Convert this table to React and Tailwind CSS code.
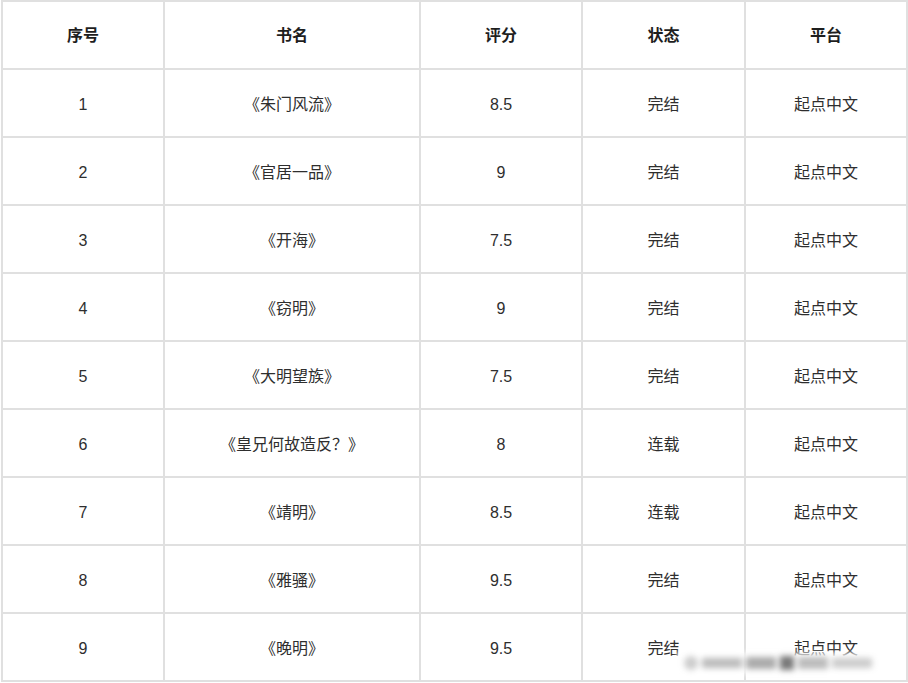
import React from "react";

const rows = [
  ["1", "《朱门风流》", "8.5", "完结", "起点中文"],
  ["2", "《官居一品》", "9", "完结", "起点中文"],
  ["3", "《开海》", "7.5", "完结", "起点中文"],
  ["4", "《窃明》", "9", "完结", "起点中文"],
  ["5", "《大明望族》", "7.5", "完结", "起点中文"],
  ["6", "《皇兄何故造反？》", "8", "连载", "起点中文"],
  ["7", "《靖明》", "8.5", "连载", "起点中文"],
  ["8", "《雅骚》", "9.5", "完结", "起点中文"],
  ["9", "《晚明》", "9.5", "完结", "起点中文"],
];

const headers = ["序号", "书名", "评分", "状态", "平台"];
const widths = ["w-[162px]", "w-[256px]", "w-[162px]", "w-[163px]", "w-[162px]"];

export default function App() {
  return (
    <div
      className="w-[908px] h-[683px] bg-white relative overflow-hidden pl-px"
      style={{ fontFamily: '"Liberation Sans", "Noto Sans CJK SC", sans-serif' }}
    >
      <table className="border-collapse table-fixed w-[906px] text-[16px] text-[#2e2e2e]">
        <colgroup>
          {widths.map((w, i) => (
            <col key={i} className={w} />
          ))}
        </colgroup>
        <thead>
          <tr>
            {headers.map((h) => (
              <th
                key={h}
                className="h-[68px] border-2 border-[#e0e0e0] text-center align-middle font-bold text-[#1e1e1e] p-0 pt-[2px]"
              >
                {h}
              </th>
            ))}
          </tr>
        </thead>
        <tbody>
          {rows.map((r) => (
            <tr key={r[0]}>
              {r.map((c, i) => (
                <td
                  key={i}
                  className="h-[68px] border-2 border-[#e0e0e0] text-center align-middle p-0 pt-[3px]"
                >
                  {c}
                </td>
              ))}
            </tr>
          ))}
        </tbody>
      </table>
      <div className="absolute left-[676px] top-[652px] w-[222px] h-[22px] bg-white/75 blur-[2px] flex items-center gap-[4px] px-2">
        <div className="w-[14px] h-[14px] rounded-full bg-[#ccc] blur-[2px]" />
        <div className="w-[40px] h-[10px] bg-[#bbb] blur-[2px]" />
        <div className="w-[30px] h-[12px] bg-[#aaa] blur-[2px]" />
        <div className="w-[14px] h-[14px] bg-[#777] blur-[2px]" />
        <div className="w-[30px] h-[12px] bg-[#bbb] blur-[2px]" />
        <div className="w-[40px] h-[10px] bg-[#ccc] blur-[2px]" />
      </div>
    </div>
  );
}
